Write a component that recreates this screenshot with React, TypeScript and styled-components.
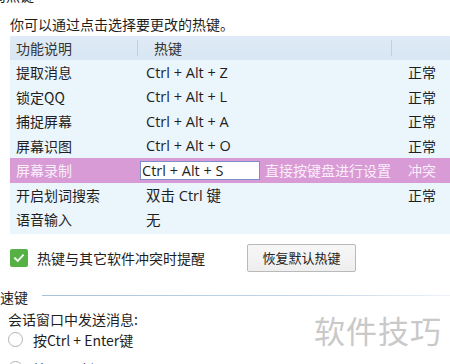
import React from "react";
import styled, { createGlobalStyle } from "styled-components";

const GlobalStyle = createGlobalStyle`
  html, body {
    margin: 0;
    padding: 0;
    background: #fff;
    overflow: hidden;
  }
  body {
    font-family: "Noto Sans CJK SC", "Open Sans", sans-serif;
    color: #1f1f1f;
  }
`;

interface Hotkey {
  name: string;
  keys: string;
  status: string;
  conflict?: boolean;
}

const rows: Hotkey[] = [
  { name: "提取消息", keys: "Ctrl + Alt + Z", status: "正常" },
  { name: "锁定QQ", keys: "Ctrl + Alt + L", status: "正常" },
  { name: "捕捉屏幕", keys: "Ctrl + Alt + A", status: "正常" },
  { name: "屏幕识图", keys: "Ctrl + Alt + O", status: "正常" },
  { name: "屏幕录制", keys: "Ctrl + Alt + S", status: "冲突", conflict: true },
  { name: "开启划词搜索", keys: "双击 Ctrl 键", status: "正常" },
  { name: "语音输入", keys: "无", status: "" },
];

const App = () => (
  <Page>
    <GlobalStyle />
    <SectionTitle $offset={-22} $top={-14}>全局热键</SectionTitle>
    <Hint>你可以通过点击选择要更改的热键。</Hint>

    <Table>
      <HeaderRow>
        <HeadCell>功能说明</HeadCell>
        <HeadCell $divider $pad={17}>热键</HeadCell>
        <HeadCell $divider />
      </HeaderRow>
      {rows.map((r) => (
        <Row key={r.name} $active={r.conflict}>
          <NameCell $active={r.conflict}>{r.name}</NameCell>
          {r.conflict ? (
            <KeyCell>
              <KeyInput>{r.keys}</KeyInput>
              <KeyHint>直接按键盘进行设置</KeyHint>
            </KeyCell>
          ) : (
            <KeyCell $pad={9}>{r.keys}</KeyCell>
          )}
          <StatusCell $active={r.conflict}>{r.status}</StatusCell>
        </Row>
      ))}
    </Table>

    <OptionRow>
      <CheckLabel>
        <CheckBox>
          <svg width="12" height="12" viewBox="0 0 24 24">
            <polyline
              points="4 12.5 9.5 18 20 6.5"
              fill="none"
              stroke="#fff"
              strokeWidth="3.6"
              strokeLinecap="square"
            />
          </svg>
        </CheckBox>
        热键与其它软件冲突时提醒
      </CheckLabel>
      <ResetButton>恢复默认热键</ResetButton>
    </OptionRow>

    <SectionHeader>
      <SectionTitle $offset={-14}>快速键</SectionTitle>
      <Rule />
    </SectionHeader>

    <SubLabel>会话窗口中发送消息:</SubLabel>
    <RadioRow>
      <Radio />
      按Ctrl + Enter键
    </RadioRow>
    <RadioRow $gap={9}>
      <Radio />
      按Enter键
    </RadioRow>

    <Watermark>软件技巧</Watermark>
  </Page>
);

export default App;

const Page = styled.div`
  position: relative;
  width: 450px;
  height: 364px;
  overflow: hidden;
  display: flex;
  flex-direction: column;
  font-size: 14px;
`;

const SectionTitle = styled.div<{ $offset: number; $top?: number }>`
  margin-left: ${({ $offset }) => $offset}px;
  margin-top: ${({ $top }) => $top ?? 0}px;
  line-height: 18px;
  white-space: nowrap;
  flex-shrink: 0;
`;

const Hint = styled.div`
  padding-left: 10px;
  margin-top: 11px;
  line-height: 18px;
  height: 18px;
`;

const Table = styled.div`
  margin: 3px 0 0 10px;
  width: 440px;
  background: #ebf5fc;
  display: flex;
  flex-direction: column;
  padding-bottom: 2px;
`;

const HeaderRow = styled.div`
  display: grid;
  grid-template-columns: 127px 254px 1fr;
  height: 24px;
  background: linear-gradient(#dfebf6, #d8e6f3);
`;

const HeadCell = styled.div<{ $divider?: boolean; $pad?: number }>`
  position: relative;
  display: flex;
  align-items: center;
  padding-left: ${({ $pad }) => $pad ?? 6}px;
  color: #333;

  ${({ $divider }) =>
    $divider &&
    `
    &::before {
      content: "";
      position: absolute;
      left: 0;
      top: 4px;
      bottom: 4px;
      width: 1px;
      background: #c3d0dc;
    }
  `}
`;

const Row = styled.div<{ $active?: boolean }>`
  display: grid;
  grid-template-columns: 127px 254px 1fr;
  height: 24.5px;
  align-items: center;
  background: ${({ $active }) => ($active ? "#d89bd5" : "transparent")};
`;

const NameCell = styled.div<{ $active?: boolean }>`
  padding-left: 6px;
  color: ${({ $active }) => ($active ? "#fbeefb" : "#1f1f1f")};
`;

const KeyCell = styled.div<{ $pad?: number }>`
  display: flex;
  align-items: center;
  padding-left: ${({ $pad }) => $pad ?? 3}px;
  font-family: "Open Sans", "Noto Sans CJK SC", sans-serif;
  font-size: 14.5px;
`;

const KeyInput = styled.div`
  width: 122px;
  height: 17px;
  background: #fff;
  border: 1px solid #7c8fcc;
  line-height: 17px;
  padding-left: 1px;
  white-space: nowrap;
  overflow: hidden;
  font-size: 14.5px;
`;

const KeyHint = styled.span`
  margin-left: 5px;
  color: #fbeefb;
  font-family: "Noto Sans CJK SC", sans-serif;
  font-size: 14px;
  white-space: nowrap;
`;

const StatusCell = styled.div<{ $active?: boolean }>`
  padding-left: 17px;
  color: ${({ $active }) => ($active ? "#fbeefb" : "#1f1f1f")};
`;

const OptionRow = styled.div`
  display: flex;
  align-items: center;
  margin: 10px 0 0 10px;
  height: 28px;
`;

const CheckLabel = styled.label`
  display: flex;
  align-items: center;
  gap: 9px;
  width: 237px;
`;

const CheckBox = styled.span`
  width: 18px;
  height: 18px;
  border-radius: 2px;
  background: #55b046;
  display: flex;
  align-items: center;
  justify-content: center;
`;

const ResetButton = styled.button`
  width: 109px;
  height: 28px;
  border: 1px solid #b9b9b9;
  border-radius: 2px;
  background: linear-gradient(#f7f7f7, #eeeeee);
  font-family: "Noto Sans CJK SC", sans-serif;
  font-size: 13px;
  color: #222;
  padding: 0;
`;

const SectionHeader = styled.div`
  display: flex;
  align-items: center;
  margin-top: 16px;
`;

const Rule = styled.div`
  flex: 1;
  height: 1px;
  margin: -2px 0 0 14px;
  background: linear-gradient(to right, #a8c2da, #c7d8e8 70%, #eef3f8);
`;

const SubLabel = styled.div`
  padding-left: 8px;
  margin-top: 4px;
  line-height: 18px;
`;

const RadioRow = styled.label<{ $gap?: number }>`
  display: flex;
  align-items: center;
  gap: 10px;
  padding-left: 8px;
  margin-top: ${({ $gap }) => $gap ?? 2}px;
  height: 20px;
  flex-shrink: 0;
`;

const Radio = styled.span`
  width: 13px;
  height: 13px;
  border-radius: 50%;
  border: 1px solid #b3b3b3;
  background: #fff;
`;

const Watermark = styled.div`
  position: absolute;
  right: 8px;
  top: 310px;
  font-size: 31px;
  color: #c9c9c9;
  letter-spacing: 1px;
  line-height: 40px;
`;
